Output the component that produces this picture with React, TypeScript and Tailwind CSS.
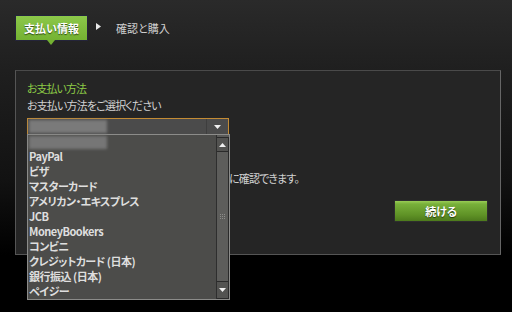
import React from "react";

const font = "font-['Meiryo','Noto_Sans_CJK_JP','Noto_Sans',sans-serif] [font-feature-settings:'palt']";

const items = [
  "",
  "PayPal",
  "ビザ",
  "マスターカード",
  "アメリカン・エキスプレス",
  "JCB",
  "MoneyBookers",
  "コンビニ",
  "クレジットカード (日本)",
  "銀行振込 (日本)",
  "ペイジー",
];

function Caret({ className }: { className?: string }) {
  return (
    <svg width="7" height="4" viewBox="0 0 7 4" className={className}>
      <path d="M0 0H7L3.5 4Z" fill="#f0f0f0" />
    </svg>
  );
}

export default function App() {
  return (
    <div
      className={`${font} relative w-[512px] h-[312px] overflow-hidden bg-[linear-gradient(to_bottom,#2a2a2a_0px,#1f1f1f_70px,#121212_180px,#000_255px)] text-[11px] leading-[15px]`}
    >
      {/* Steps */}
      <div className="flex items-center pt-[13px] pl-[15px] h-[43px]">
        <div className="relative w-[73px] h-[26px] bg-[linear-gradient(to_bottom,#8cc84a,#74b232)] border border-[#24243a] flex items-center justify-center text-white font-bold text-[11px] [text-shadow:0_1px_1px_#2c4a10]">
          支払い情報
          <div className="absolute left-[31px] -bottom-[5px] w-0 h-0 border-l-[4px] border-r-[4px] border-t-[5px] border-l-transparent border-r-transparent border-t-[#74b232]" />
        </div>
        <svg width="5" height="7" viewBox="0 0 5 7" className="ml-[8px] -mt-[4px]">
          <path d="M0 0V7L5 3.5Z" fill="#e8e8e8" />
        </svg>
        <span className="ml-[15px] text-[#cfcfcf] text-[11px]">確認と購入</span>
      </div>

      {/* Panel */}
      <div className="relative mt-[27px] ml-[15px] w-[486px] h-[185px] bg-[#252525] border border-[#555] border-t-[#4a4a4a] border-r-[#666] pl-[11px] pt-[10px]">
        <div className="text-[#8dcb45] tracking-[-1px]">お支払い方法</div>
        <div className="mt-[2px] text-[#d2d2d2] tracking-[-0.85px]">お支払い方法をご選択ください</div>

        {/* Select */}
        <div className="relative mt-[5px] w-[202px] h-[17px] bg-[#4b4b4b] border border-[#c38b34] flex">
          <div className="flex-1 flex items-center pl-px">
            <div className="w-[78px] h-[13px] bg-[#7a7a7a] blur-[1.5px]" />
          </div>
          <div className="w-[22px] h-full border-l border-[#3e3e3e] flex items-center justify-center">
            <Caret />
          </div>

          {/* Dropdown */}
          <div className="absolute left-[-1px] top-[15px] w-[203px] h-[166px] bg-[#4c4c4a] border border-[#8c8c8a] flex z-10">
            <div className="flex-1 flex flex-col">
              {items.map((it, i) => (
                <div key={i} className="h-[15px] pl-[1px] flex items-center text-[#dedede] font-semibold text-[11px] tracking-[-0.5px] whitespace-nowrap">
                  {it === "" ? <div className="w-[78px] h-[13px] bg-[#767676] blur-[1.5px]" /> : it}
                </div>
              ))}
            </div>
            <div className="w-[13px] h-full flex flex-col border-l border-[#2e2e2e] bg-[#5a5a58] pt-[2px]">
              <div className="h-[15px] border-y border-r border-[#2a2a2a] bg-[#535351] flex items-center justify-center">
                <Caret className="rotate-180" />
              </div>
              <div className="flex-1 border-r border-b border-[#2a2a2a] bg-[#5d5d5b] flex items-center justify-center">
                <svg width="6" height="6" viewBox="0 0 6 6">
                  <path d="M0.5 0V6M2.5 0V6M4.5 0V6" stroke="#8c8c8a" strokeWidth="1" strokeDasharray="1 1" />
                </svg>
              </div>
              <div className="h-[17px] border-b border-r border-[#2a2a2a] bg-[#535351] flex items-center justify-center">
                <Caret />
              </div>
            </div>
          </div>
        </div>

        <div className="mt-[36px] pl-[202px] text-[#d2d2d2] tracking-[-0.85px]">に確認できます。</div>

        <div className="flex justify-end pr-[12px] mt-[14px]">
          <button className="w-[94px] h-[22px] border border-[#2e2e2e] rounded-[1px] bg-[linear-gradient(to_bottom,#9acd56_0px,#78b03a_3px,#5f9226_14px,#4d7a1c_100%)] text-white font-bold text-[11px] [text-shadow:0_1px_1px_#23380c] flex items-center justify-center">
            続ける
          </button>
        </div>
      </div>
    </div>
  );
}
